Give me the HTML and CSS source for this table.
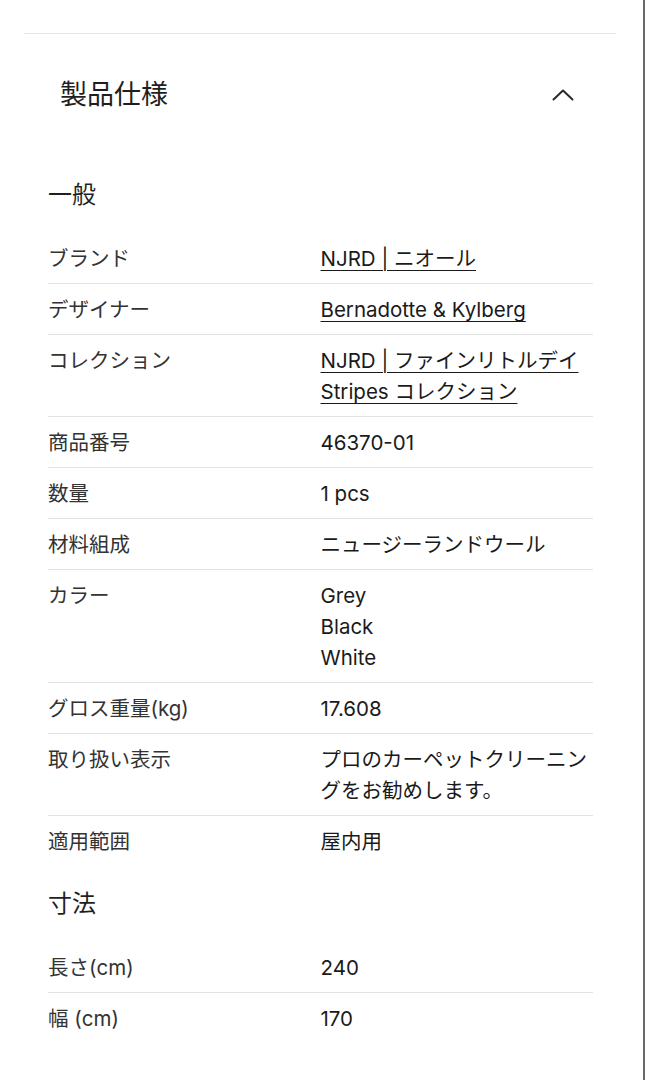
FILE: index.html
```html
<!DOCTYPE html>
<html lang="ja">
<head>
<meta charset="utf-8">
<title>製品仕様</title>
<link rel="stylesheet" href="styles.css">
</head>
<body>
<div class="page">
  <section class="accordion">
    <div class="acc-header">
      <h2 class="acc-title">製品仕様</h2>
      <span class="acc-toggle" aria-label="閉じる">
        <svg width="24" height="24" viewBox="0 0 24 24" fill="none" stroke="#2b2b2b" stroke-width="2" stroke-linecap="round" stroke-linejoin="round"><polyline points="2.5 16.5 12 7.5 21.5 16.5"/></svg>
      </span>
    </div>
    <div class="acc-body">
      <div class="group">
        <h3 class="group-title">一般</h3>
        <dl class="specs">
          <div class="row"><dt>ブランド</dt><dd><a href="#">NJRD | ニオール</a></dd></div>
          <div class="row"><dt>デザイナー</dt><dd><a href="#">Bernadotte &amp; Kylberg</a></dd></div>
          <div class="row"><dt>コレクション</dt><dd><a href="#">NJRD | ファインリトルデイ Stripes コレクション</a></dd></div>
          <div class="row"><dt>商品番号</dt><dd>46370-01</dd></div>
          <div class="row"><dt>数量</dt><dd>1 pcs</dd></div>
          <div class="row"><dt>材料組成</dt><dd>ニュージーランドウール</dd></div>
          <div class="row"><dt>カラー</dt><dd>Grey<br>Black<br>White</dd></div>
          <div class="row"><dt>グロス重量(kg)</dt><dd>17.608</dd></div>
          <div class="row"><dt>取り扱い表示</dt><dd>プロのカーペットクリーニングをお勧めします。</dd></div>
          <div class="row"><dt>適用範囲</dt><dd>屋内用</dd></div>
        </dl>
      </div>
      <div class="group">
        <h3 class="group-title">寸法</h3>
        <dl class="specs">
          <div class="row"><dt>長さ(cm)</dt><dd>240</dd></div>
          <div class="row"><dt>幅 (cm)</dt><dd>170</dd></div>
        </dl>
      </div>
    </div>
  </section>
</div>
</body>
</html>
```

FILE: styles.css
```css
* { box-sizing: border-box; }

html, body {
  margin: 0;
  padding: 0;
  background: #ffffff;
}

body {
  font-family: Inter, "Noto Sans CJK JP", sans-serif;
  color: #222222;
}

.page {
  width: 645px;
  min-height: 1080px;
  padding: 33px 27px 0 24px;
  border-right: 2px solid #6a6a6a;
}

.accordion {
  border-top: 1px solid #e4e4e4;
}

.acc-header {
  display: flex;
  align-items: center;
  justify-content: space-between;
  padding: 43px 41px 44px 36px;
}

.acc-title {
  margin: 0;
  font-size: 27px;
  line-height: 36px;
  font-weight: 400;
  color: #1f1f1f;
}

.acc-toggle {
  display: flex;
  width: 24px;
  height: 24px;
}

.acc-body {
  padding: 0 23px 0 24px;
}

.group {
  padding-top: 23px;
}

.group-title {
  margin: 0 0 23px;
  font-size: 24px;
  line-height: 30px;
  font-weight: 400;
  color: #1f1f1f;
}

.specs {
  margin: 0;
}

.row {
  display: grid;
  grid-template-columns: 1fr 1fr;
  padding: 10px 0 9px;
  border-bottom: 1px solid #e2e2e2;
  font-size: 20.5px;
  line-height: 31px;
}

.row:last-child {
  border-bottom: none;
}

.row dt {
  margin: 0;
  color: #333333;
}

.row dd {
  margin: 0;
  color: #1a1a1a;
}

.row a {
  color: #1a1a1a;
  text-decoration: underline;
  text-decoration-thickness: 1px;
  text-underline-offset: 4px;
}
```
